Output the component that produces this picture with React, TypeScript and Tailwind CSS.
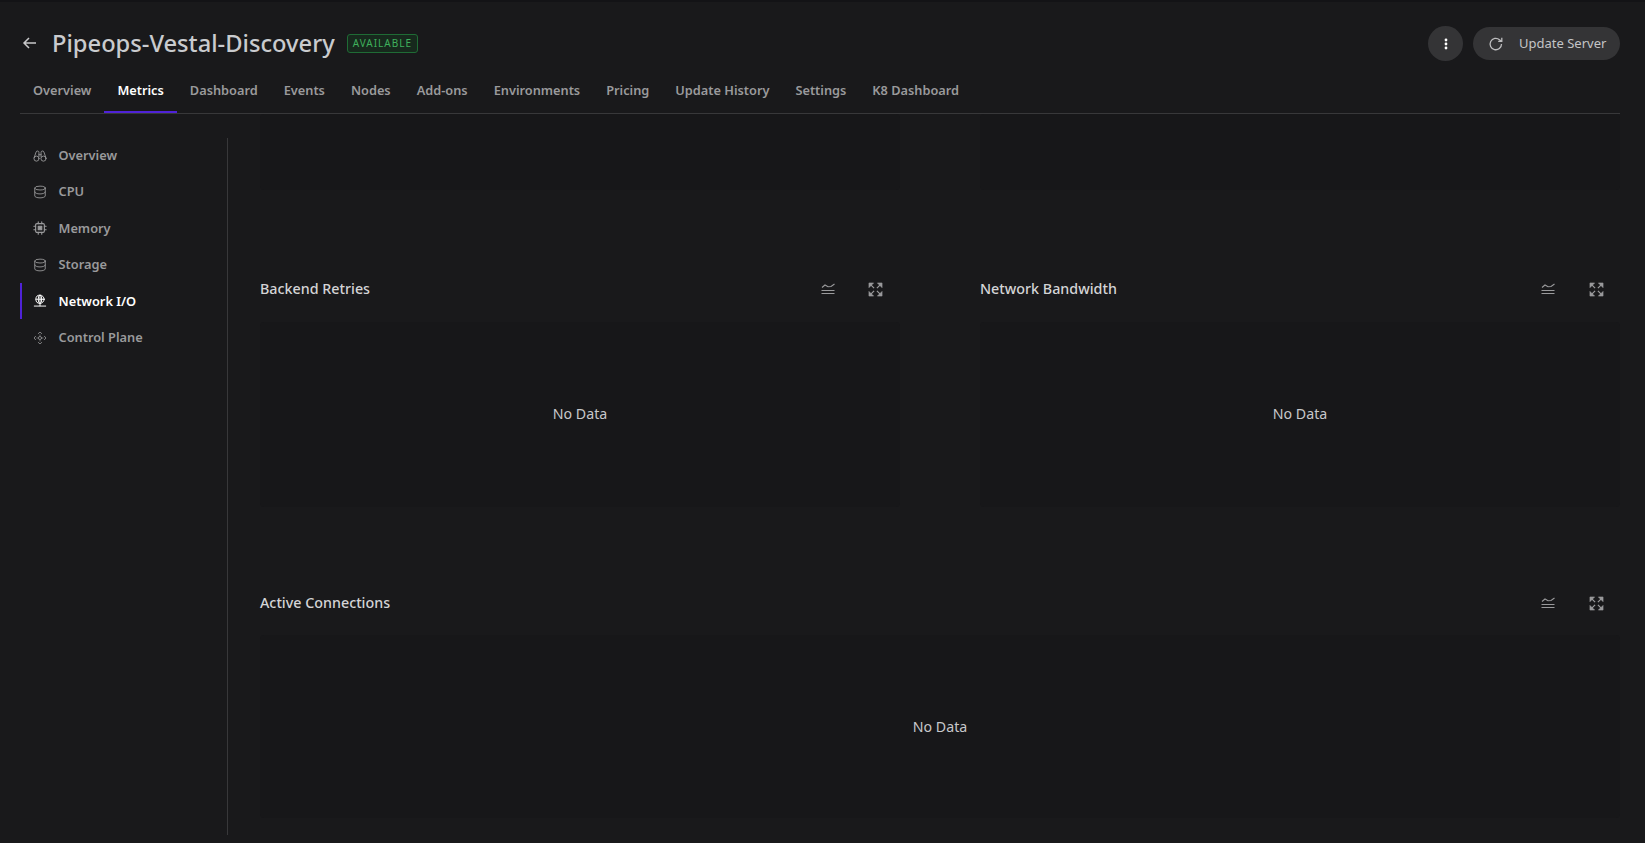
import React from "react";

const tabs = ["Overview","Metrics","Dashboard","Events","Nodes","Add-ons","Environments","Pricing","Update History","Settings","K8 Dashboard"];

const I = ({ children, size = 14, sw = 1 }: { children: React.ReactNode; size?: number; sw?: number }) => (
  <svg width={size} height={size} viewBox="0 0 16 16" fill="none" stroke="currentColor" strokeWidth={sw} strokeLinecap="round" strokeLinejoin="round" className="shrink-0">{children}</svg>
);

const Binoculars = () => (
  <I><circle cx="4" cy="11" r="2.9" /><circle cx="12" cy="11" r="2.9" /><path d="M1.3 10 3.5 3.5Q4 2 5.5 2.300 6.800 2.500 6.800 4V9M14.700 10 12.500 3.500Q12 2 10.500 2.300 9.200 2.500 9.200 4V9M6.800 6.500H9.200" /></I>
);
const Db = () => (
  <I><ellipse cx="8" cy="3.500" rx="6" ry="2.200" /><path d="M2 3.500V12.500C2 13.700 4.700 14.700 8 14.700S14 13.700 14 12.500V3.500M2 8C2 9.200 4.700 10.200 8 10.200S14 9.200 14 8" /></I>
);
const Chip = () => (
  <I sw={1.3}><rect x="3" y="3" width="10" height="10" rx="1.500" /><rect x="6" y="6" width="4" height="4" fill="currentColor" /><path d="M6 1V3M10 1V3M6 13V15M10 13V15M1 6H3M1 10H3M13 6H15M13 10H15" /></I>
);
const Net = () => (
  <I sw={1.1}><circle cx="8" cy="6" r="4.700" /><ellipse cx="8" cy="6" rx="2" ry="4.700" /><path d="M3.300 6H12.700M8 1.300V10.700M8 10.700V13.500M1.500 13.800H14.500" /></I>
);
const Plane = () => (
  <I sw={0.9}><circle cx="8" cy="8" r="1.800" /><path d="M6 3 8 1.200 10 3M6 13 8 14.800 10 13M3 6 1.200 8 3 10M13 6 14.800 8 13 10" /><path d="M8 4.500V5M8 11V11.500M4.500 8H5M11 8H11.500" /></I>
);

const side: [string, React.ReactNode, boolean][] = [
  ["Overview", <Binoculars />, false],
  ["CPU", <Db />, false],
  ["Memory", <Chip />, false],
  ["Storage", <Db />, false],
  ["Network I/O", <Net />, true],
  ["Control Plane", <Plane />, false],
];

const Tools = ({ right }: { right?: boolean }) => (
  <div className={`flex items-center text-[#9a9a9c] ${right ? "gap-[34px]" : "gap-[33px]"}`}>
    <svg width="14" height="14" viewBox="0 0 14 14" fill="none" stroke="currentColor" strokeWidth="1.100"><path d="M1 5.500 4 3 7 4.800 10 4.500 13.500 2" /><path d="M0.500 8.500H13.500M0.500 11.500H13.500" strokeWidth="1.200" /></svg>
    <svg width="15" height="15" viewBox="0 0 16 16" fill="currentColor" stroke="currentColor" strokeWidth="0.600"><path d="M1 1H6L1 6ZM15 1H10L15 6ZM1 15H6L1 10ZM15 15H10L15 10Z" /><path d="M3 3 6.500 6.500M13 3 9.500 6.500M3 13 6.500 9.500M13 13 9.500 9.500" strokeWidth="1.300" /></svg>
  </div>
);

const Chart = ({ title, gap, h, right, lift }: { title: string; gap: string; h: string; right?: boolean; lift?: boolean }) => (
  <div className="flex flex-col min-w-0">
    <div className={`flex items-center justify-between h-[24px] ${right ? "pr-[16px]" : "pr-[17px]"}`}>
      <span className="text-[14.300px] font-medium text-[#d4d4d6] leading-none">{title}</span>
      <Tools right={right} />
    </div>
    <div className={`${gap} ${h} ${lift ? "pb-[2px]" : ""} rounded-sm bg-[#171719] flex items-center justify-center text-[14.200px] text-[#c8c8ca]`}>No Data</div>
  </div>
);

export default function App() {
  return (
    <div className="h-[843px] w-[1645px] overflow-hidden bg-[#19191b] font-['Noto_Sans','Liberation_Sans',sans-serif]">
      <div className="h-[2px] bg-[#131316]" />
      <div className="pl-[20px] pr-[25px]">
        <div className="flex items-center justify-between h-[65px] mt-[9px]">
          <div className="flex items-center">
            <svg width="18" height="18" viewBox="0 0 18 18" fill="none" stroke="#c8c8ca" strokeWidth="1.500" className="ml-[1px] -mt-[1px]"><path d="M15 9H3M8 4 3 9 8 14" /></svg>
            <h1 className="ml-[13px] text-[23.700px] leading-none font-medium text-[#c9cbce]">Pipeops-Vestal-Discovery</h1>
            <span className="ml-[12px] h-[19px] px-[5px] flex items-center rounded-[3px] border border-[#1f6b35] bg-[#17291d] text-[10px] tracking-[1px] text-[#3fb05c]">AVAILABLE</span>
          </div>
          <div className="flex items-center gap-[10px]">
            <button className="w-[35px] h-[35px] rounded-full bg-[#343436] flex items-center justify-center">
              <svg width="4" height="12" viewBox="0 0 4 12" fill="#fff"><circle cx="2" cy="2" r="1.400" /><circle cx="2" cy="6" r="1.400" /><circle cx="2" cy="10" r="1.400" /></svg>
            </button>
            <button className="w-[147px] h-[33px] rounded-full bg-[#343436] flex items-center pl-[15px] text-[#c4c4c6] text-[13px]">
              <svg width="16" height="16" viewBox="0 0 16 16" fill="none" stroke="#bdbdbf" strokeWidth="1.300"><path d="M13.500 8A5.700 5.700 0 1 1 11.500 3.700L13.500 5.200M13.800 1.800V5.400H10.200" /></svg>
              <span className="ml-[15px]">Update Server</span>
            </button>
          </div>
        </div>
        <div className="flex items-start h-[39px] border-b border-[#38383a] mt-[-1px]">
          {tabs.map((t) => (
            <div key={t} className={`h-[38px] pt-[6px] leading-[18px] px-[13px] text-[12.770px] font-semibold border-b-2 ${t === "Metrics" ? "text-white border-[#4f22d8]" : "text-[#9a9a9c] border-transparent"}`}>{t}</div>
          ))}
        </div>
        <div className="flex mt-[24px] h-[697px]">
          <aside className="w-[208px] shrink-0 border-r border-[#38383a] flex flex-col">
            <div className="-mt-[0.5px] flex flex-col">
              {side.map(([label, icon, active]) => (
                <div key={label} className={`flex items-center h-[36.400px] border-l-2 pl-[10.500px] gap-[12px] text-[12.800px] font-semibold ${active ? "border-[#4f22d8] text-white" : "border-transparent text-[#9a9a9c]"}`}>
                  {icon}
                  <span>{label}</span>
                </div>
              ))}
            </div>
          </aside>
          <main className="flex-1 min-w-0 ml-[32px] -mt-[24px] flex flex-col">
            <div className="grid grid-cols-2 gap-[80px]">
              <div className="h-[76px] rounded-sm bg-[#171719]" />
              <div className="h-[76px] rounded-sm bg-[#171719]" />
            </div>
            <div className="grid grid-cols-2 gap-[80px] mt-[87px]">
              <Chart title="Backend Retries" gap="mt-[21px]" h="h-[185px]" lift />
              <Chart title="Network Bandwidth" gap="mt-[21px]" h="h-[185px]" right lift />
            </div>
            <div className="mt-[84px]">
              <Chart title="Active Connections" gap="mt-[20px]" h="h-[183px]" right />
            </div>
          </main>
        </div>
      </div>
    </div>
  );
}
